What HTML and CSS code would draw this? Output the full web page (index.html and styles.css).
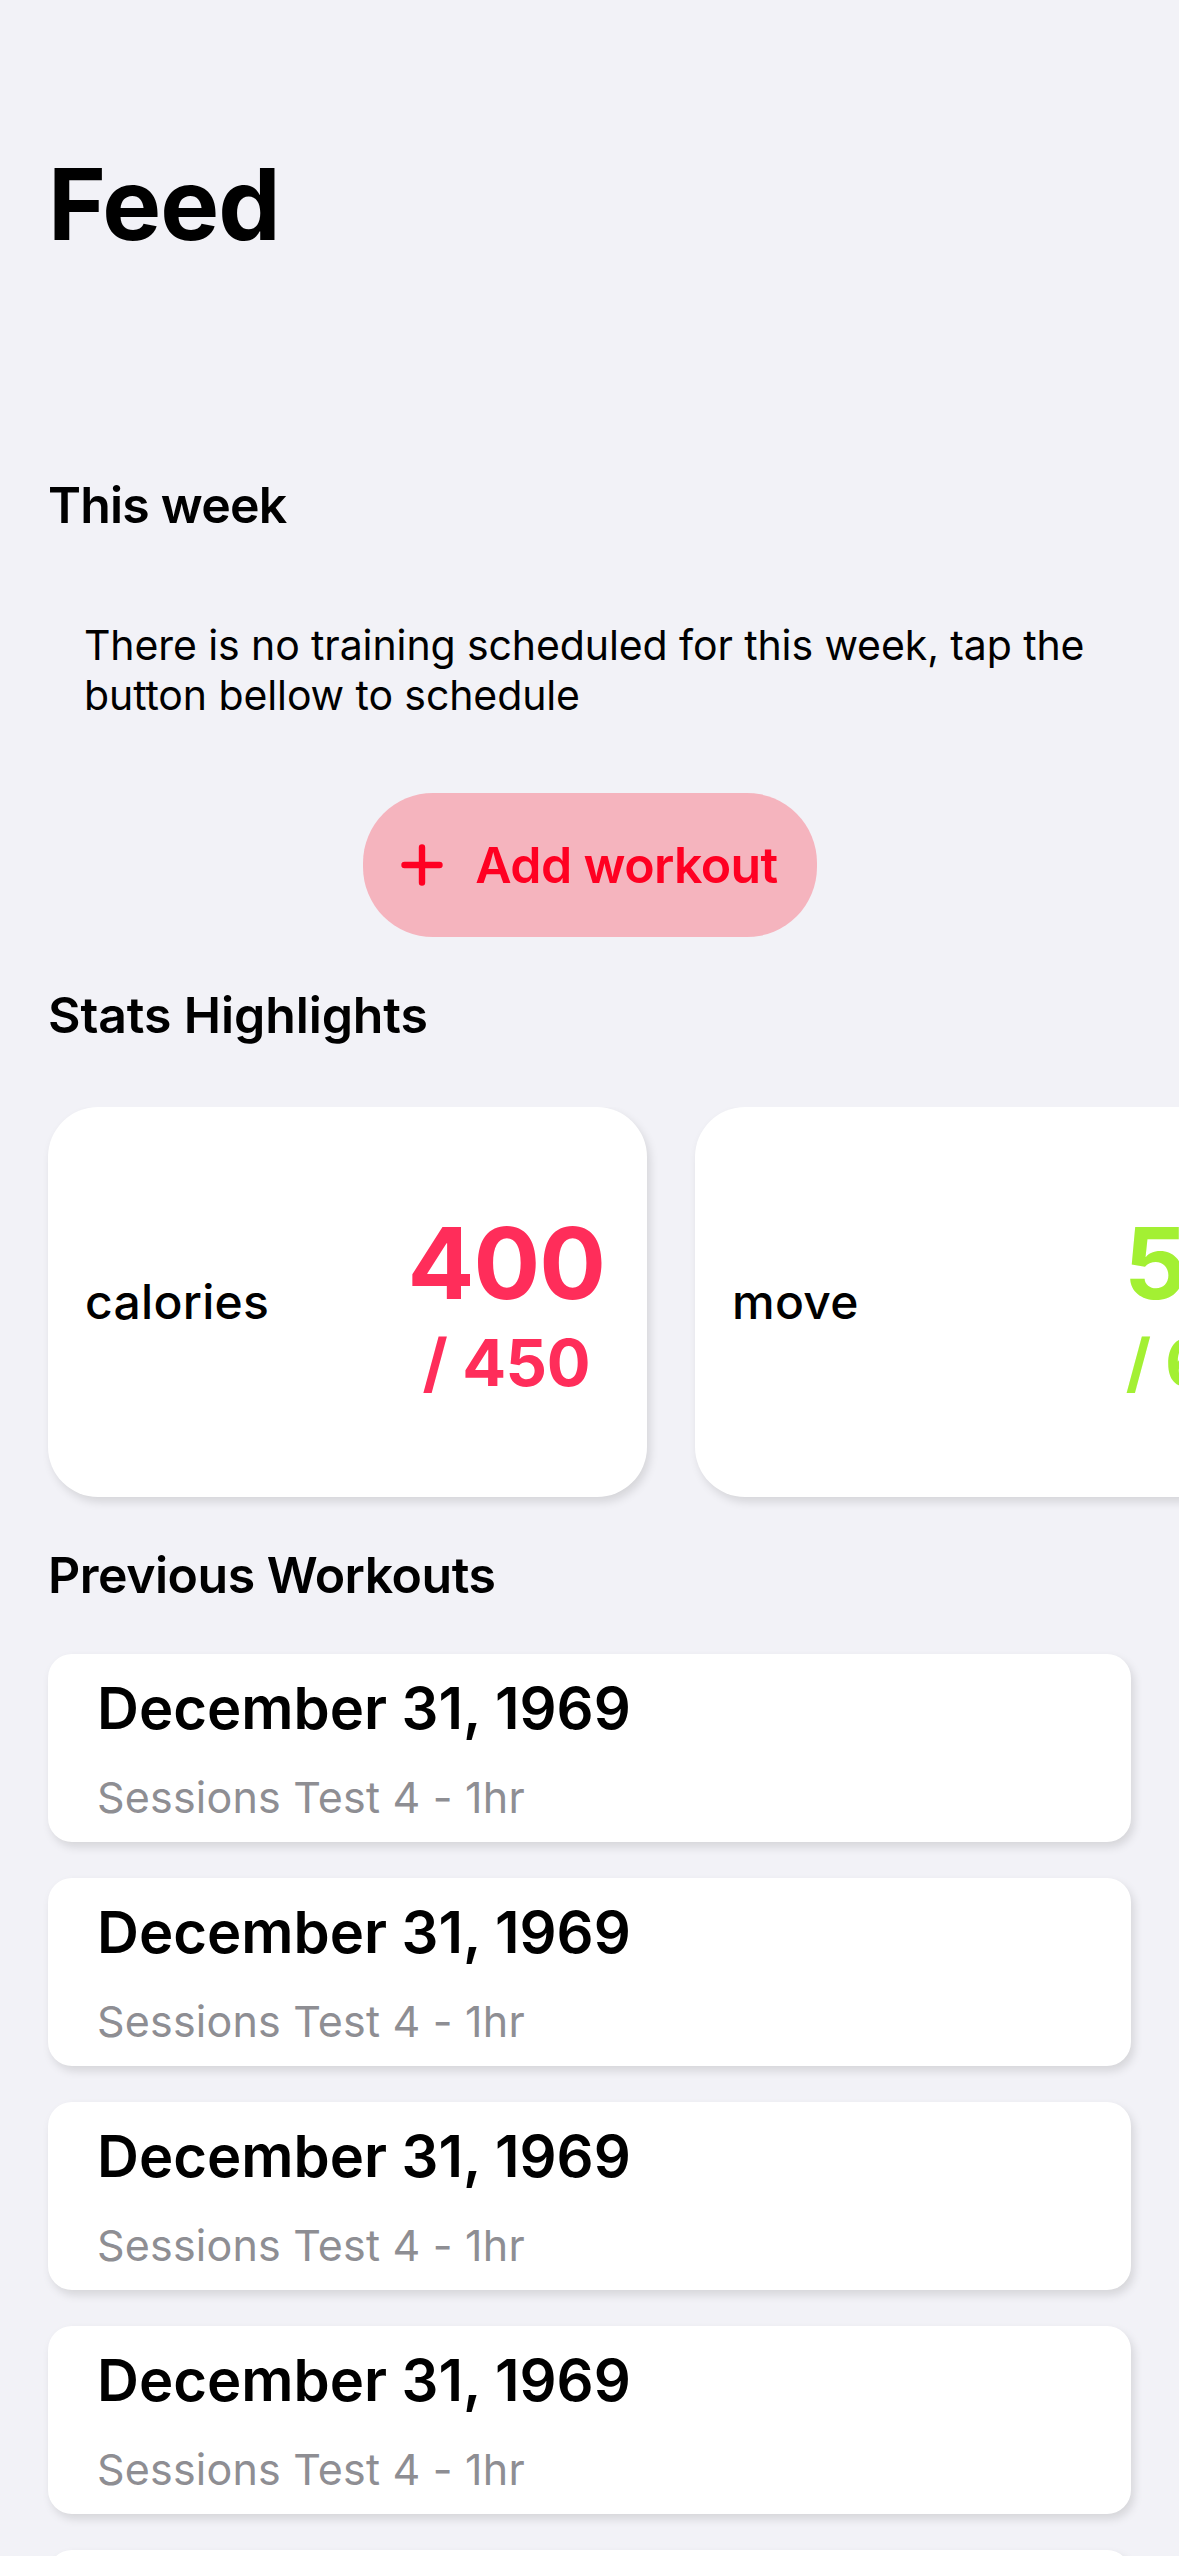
FILE: index.html
```html
<!DOCTYPE html>
<html lang="en">
<head>
<meta charset="utf-8">
<title>Feed</title>
<link rel="stylesheet" href="styles.css">
</head>
<body>
<main class="page">
  <h1 class="title">Feed</h1>

  <h2 class="section-title week-title">This week</h2>
  <p class="empty-note">There is no training scheduled for this week, tap the button bellow to schedule</p>

  <div class="button-row">
    <button class="add-button" type="button">
      <svg class="plus" width="42" height="42" viewBox="0 0 42 42" aria-hidden="true">
        <path d="M21 3.5V38.5M3.5 21H38.5" stroke="#ff0022" stroke-width="6.4" stroke-linecap="round" fill="none"/>
      </svg>
      <span>Add workout</span>
    </button>
  </div>

  <h2 class="section-title stats-title">Stats Highlights</h2>
  <div class="stats-row">
    <div class="stat-card">
      <span class="stat-label">calories</span>
      <div class="stat-values pink">
        <span class="stat-value">400</span>
        <span class="stat-goal">/ 450</span>
      </div>
    </div>
    <div class="stat-card">
      <span class="stat-label">move</span>
      <div class="stat-values green">
        <span class="stat-value">50</span>
        <span class="stat-goal">/ 60</span>
      </div>
    </div>
  </div>

  <h2 class="section-title workouts-title">Previous Workouts</h2>
  <ul class="workout-list">
    <li class="workout-card">
      <span class="workout-date">December 31, 1969</span>
      <span class="workout-meta">Sessions Test 4 - 1hr</span>
    </li>
    <li class="workout-card">
      <span class="workout-date">December 31, 1969</span>
      <span class="workout-meta">Sessions Test 4 - 1hr</span>
    </li>
    <li class="workout-card">
      <span class="workout-date">December 31, 1969</span>
      <span class="workout-meta">Sessions Test 4 - 1hr</span>
    </li>
    <li class="workout-card">
      <span class="workout-date">December 31, 1969</span>
      <span class="workout-meta">Sessions Test 4 - 1hr</span>
    </li>
    <li class="workout-card">
      <span class="workout-date">December 31, 1969</span>
      <span class="workout-meta">Sessions Test 4 - 1hr</span>
    </li>
  </ul>
</main>
</body>
</html>
```

FILE: styles.css
```css
html, body {
  margin: 0;
  padding: 0;
  overflow: hidden;
}

body {
  background: #f2f2f7;
  color: #000;
  font-family: Inter, "Noto Sans", "Liberation Sans", sans-serif;
}

.page {
  padding: 0 48px;
  display: flex;
  flex-direction: column;
}

.title {
  margin: 144px 0 0;
  font-size: 99px;
  line-height: 120px;
  font-weight: 700;
  letter-spacing: -1px;
}

.section-title {
  margin: 0;
  font-size: 50px;
  line-height: 60px;
  font-weight: 600;
  letter-spacing: -0.5px;
}

.week-title {
  margin-top: 211px;
  letter-spacing: -0.8px;
}

.empty-note {
  margin: 85px 0 0;
  padding: 0 36px;
  font-size: 41px;
  line-height: 50px;
  font-weight: 400;
  letter-spacing: -0.1px;
}

.button-row {
  margin-top: 73px;
  display: flex;
  justify-content: center;
}

.add-button {
  height: 144px;
  width: 454px;
  border: none;
  border-radius: 70px;
  background: #f5b4be;
  color: #ff0022;
  font-family: inherit;
  font-size: 50px;
  font-weight: 600;
  letter-spacing: -0.6px;
  display: flex;
  align-items: center;
  justify-content: center;
  gap: 32px;
  padding: 0;
}

.plus {
  flex: 0 0 auto;
}

.stats-title {
  margin-top: 48px;
  letter-spacing: -0.1px;
}

.stats-row {
  margin: 62px -48px 0;
  padding: 0 48px 20px;
  display: flex;
  gap: 48px;
  overflow: hidden;
}

.stat-card {
  flex: 0 0 599px;
  height: 390px;
  box-sizing: border-box;
  background: #fff;
  border-radius: 50px;
  box-shadow: 3px 5px 10px rgba(0, 0, 0, 0.12);
  display: flex;
  align-items: center;
  justify-content: space-between;
  padding: 0 42px 0 37px;
}

.stat-label {
  font-size: 48px;
  line-height: 58px;
  font-weight: 500;
  letter-spacing: 0.3px;
}

.stat-values {
  display: flex;
  flex-direction: column;
  align-items: center;
  padding-top: 22px;
  font-weight: 700;
}

.stat-value {
  font-size: 99px;
  line-height: 100px;
  letter-spacing: -1px;
}

.stat-goal {
  font-size: 65px;
  line-height: 100px;
  letter-spacing: -0.5px;
}

.pink {
  color: #ff2d5a;
}

.green {
  color: #a3f033;
}

.workouts-title {
  margin-top: 28px;
}

.workout-list {
  list-style: none;
  margin: 49px 0 0;
  padding: 0;
  display: flex;
  flex-direction: column;
  gap: 36px;
}

.workout-card {
  height: 188px;
  box-sizing: border-box;
  background: #fff;
  border-radius: 24px;
  box-shadow: 3px 5px 10px rgba(0, 0, 0, 0.12);
  padding: 19px 49px 0;
  display: flex;
  flex-direction: column;
}

.workout-date {
  font-size: 58px;
  line-height: 70px;
  font-weight: 600;
  letter-spacing: 0;
}

.workout-meta {
  margin-top: 28px;
  font-size: 43px;
  line-height: 52px;
  font-weight: 400;
  color: #8e8e93;
  letter-spacing: 0.2px;
}
```
